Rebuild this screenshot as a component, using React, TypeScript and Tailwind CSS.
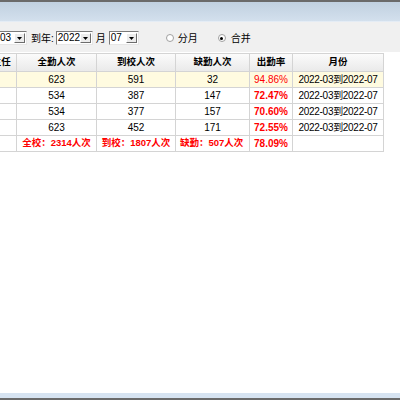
import React from "react";

const font = { fontFamily: '"Liberation Sans", "Noto Sans CJK SC", sans-serif' };

function Select({ value, w }: { value: string; w: string }) {
  return (
    <div className={`flex h-[14px] items-stretch bg-white border border-t-[#7a7a7a] border-l-[#7a7a7a] border-b-[#e6e6e6] border-r-[#e6e6e6] ${w}`}>
      <div className="flex-1 leading-[12px] pl-[1px] text-[10px] text-black">{value}</div>
      <div className="w-[11px] my-[1px] mr-[1px] bg-[#ececec] border border-t-white border-l-white border-b-[#6d6d6d] border-r-[#6d6d6d] flex items-center justify-center">
        <svg width="5" height="3" viewBox="0 0 5 3"><path d="M0 0H5L2.5 3Z" fill="#000" /></svg>
      </div>
    </div>
  );
}

function Radio({ checked }: { checked?: boolean }) {
  return (
    <div className="w-[8px] h-[8px] rounded-full border border-[#a0a0a0] bg-white flex items-center justify-center">
      {checked && <div className="w-[3px] h-[3px] rounded-full bg-black" />}
    </div>
  );
}

const rows = [
  { a: "623", b: "591", c: "32", r: "94.86%", sel: true },
  { a: "534", b: "387", c: "147", r: "72.47%" },
  { a: "534", b: "377", c: "157", r: "70.60%" },
  { a: "623", b: "452", c: "171", r: "72.55%" },
];

export default function App() {
  const td = "border border-[#d4d4d4] text-center p-0 whitespace-nowrap overflow-hidden";
  return (
    <div className="w-[400px] h-[400px] flex flex-col bg-white overflow-hidden" style={font}>
      <div className="h-[2px] bg-[#6a6a6a]" />
      <div className="h-[20px] bg-gradient-to-b from-[#c0d0e0] to-[#d3e0ed] border-b border-[#e4ecf5]" />
      <div className="h-[30px] bg-[#f0f0f0] flex items-center text-[10px] text-black pt-[2px]">
        <div className="-ml-[2px] flex items-center">
          <Select value="03" w="w-[29px]" />
        </div>
        <span className="ml-[4px]">到年:</span>
        <div className="ml-[2px]"><Select value="2022" w="w-[37px]" /></div>
        <span className="ml-[3px]">月</span>
        <div className="ml-[3px]"><Select value="07" w="w-[30px]" /></div>
        <div className="ml-[27px] flex items-center gap-[4px]"><Radio /><span>分月</span></div>
        <div className="ml-[20px] flex items-center gap-[5px]"><Radio checked /><span>合并</span></div>
      </div>
      <div className="flex-1 bg-white pt-[1px] overflow-hidden">
        <table className="table-fixed border-collapse -ml-[24px] text-[9.5px] text-black">
          <colgroup>
            <col className="w-[40px]" />
            <col className="w-[80px]" />
            <col className="w-[79px]" />
            <col className="w-[74px]" />
            <col className="w-[43px]" />
            <col className="w-[91px]" />
          </colgroup>
          <thead>
            <tr className="h-[18px] bg-gradient-to-b from-[#fbfbfb] to-[#e9e9e9] font-bold">
              <th className={td}>班主任</th>
              <th className={td}>全勤人次</th>
              <th className={td}>到校人次</th>
              <th className={td}>缺勤人次</th>
              <th className={td}>出勤率</th>
              <th className={td}>月份</th>
            </tr>
          </thead>
          <tbody>
            {rows.map((r, i) => (
              <tr key={i} className={`h-[16px] ${r.sel ? "bg-[#fffbe0]" : "bg-white"}`}>
                <td className={td}></td>
                <td className={`${td} text-[10px]`}>{r.a}</td>
                <td className={`${td} text-[10px]`}>{r.b}</td>
                <td className={`${td} text-[10px]`}>{r.c}</td>
                <td className={`${td} text-[10px] text-[#ff0000] ${r.sel ? "" : "font-bold"}`}>{r.r}</td>
                <td className={`${td} text-[10px] tracking-[-0.3px]`}>2022-03到2022-07</td>
              </tr>
            ))}
            <tr className="h-[16px] bg-white text-[#ff0000] font-bold">
              <td className={td}></td>
              <td className={td}>全校：2314人次</td>
              <td className={td}>到校：1807人次</td>
              <td className={`${td} text-left pl-[4px]`}>缺勤：507人次</td>
              <td className={`${td} text-[10px]`}>78.09%</td>
              <td className={td}></td>
            </tr>
          </tbody>
        </table>
      </div>
      <div className="h-[5px] bg-[#d6e3f1]" />
      <div className="h-[2px] bg-[#6a6a6a]" />
    </div>
  );
}
